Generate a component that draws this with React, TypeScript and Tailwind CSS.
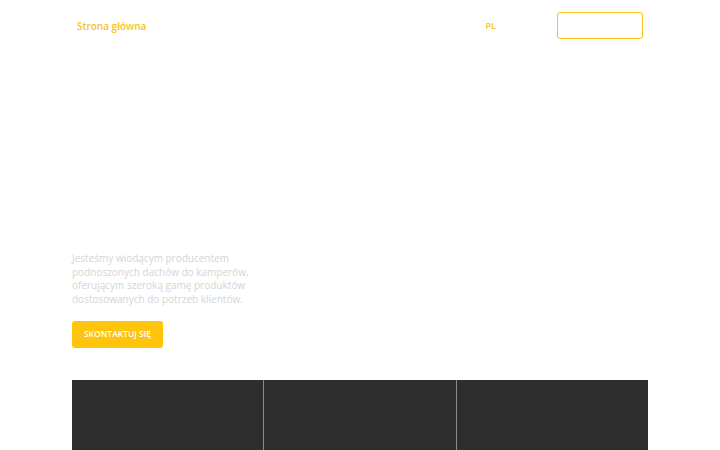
export default function App() {
  const font = { fontFamily: '"Open Sans", "Noto Sans", sans-serif' };
  return (
    <div className="w-[720px] h-[450px] bg-white overflow-hidden" style={font}>
      <div className="mx-auto w-[576px]">
        <header className="flex items-center h-[51px]">
          <div className="pl-[5px] text-[10px] font-semibold text-[#f5c518] leading-none">Strona główna</div>
          <div className="ml-auto mr-[61px] text-[9px] font-semibold text-[#f5c518] leading-none">PL</div>
          <div className="mr-[5px] w-[86px] h-[27px] rounded-[3px] border border-[#f5c518]"></div>
        </header>
        <div className="h-[201px]"></div>
        <p className="w-[190px] text-[10px] leading-[13.5px] text-[#d4d4d8]">
          Jesteśmy wiodącym producentem podnoszonych dachów do kamperów, oferującym szeroką gamę produktów dostosowanych do potrzeb klientów.
        </p>
        <button className="mt-[15px] h-[27px] w-[91px] rounded-[3px] bg-[#ffc40c] text-white text-[8.5px] font-semibold leading-none">
          SKONTAKTUJ SIĘ
        </button>
        <div className="mt-[32px] grid grid-cols-3 gap-[1px] bg-[#8a8a8a] h-[80px]">
          <div className="bg-[#2d2d2d]"></div>
          <div className="bg-[#2d2d2d]"></div>
          <div className="bg-[#2d2d2d]"></div>
        </div>
      </div>
    </div>
  );
}
